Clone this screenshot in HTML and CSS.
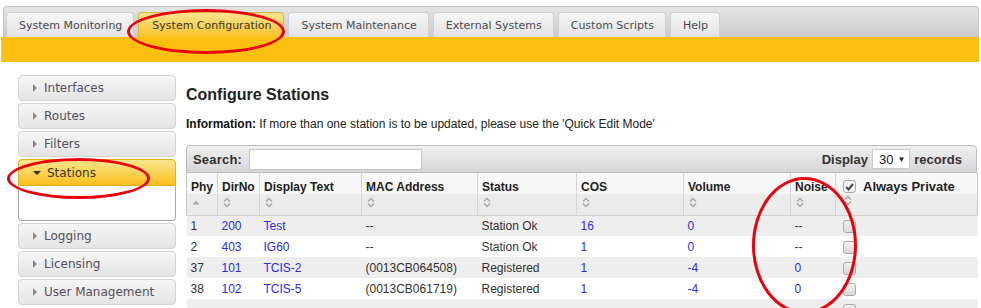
FILE: index.html
```html
<!DOCTYPE html>
<html>
<head>
<meta charset="utf-8">
<link rel="stylesheet" href="styles.css">
</head>
<body>
<div class="page">
  <div class="tabbar">
    <div class="tab">System Monitoring</div>
    <div class="tab active">System Configuration</div>
    <div class="tab">System Maintenance</div>
    <div class="tab">External Systems</div>
    <div class="tab">Custom Scripts</div>
    <div class="tab">Help</div>
  </div>
  <div class="yellowbar"></div>
  <div class="layout">
    <div class="sidebar">
      <div class="navitem"><span class="tri"></span>Interfaces</div>
      <div class="navitem"><span class="tri"></span>Routes</div>
      <div class="navitem"><span class="tri"></span>Filters</div>
      <div class="panel">
        <div class="navitem open"><span class="tri down"></span>Stations</div>
        <div class="panelbody"></div>
      </div>
      <div class="navitem"><span class="tri"></span>Logging</div>
      <div class="navitem"><span class="tri"></span>Licensing</div>
      <div class="navitem"><span class="tri"></span>User Management</div>
    </div>
    <div class="main">
      <h1 class="title">Configure Stations</h1>
      <p class="info"><b>Information:</b> If more than one station is to be updated, please use the 'Quick Edit Mode'</p>
      <div class="grid">
        <div class="toolbar">
          <label class="search">Search: <span class="searchbox"></span></label>
          <div class="display">Display <span class="select">30 <span class="caret">&#9660;</span></span> records</div>
        </div>
        <table class="data">
          <colgroup>
            <col class="c1"><col class="c2"><col class="c3"><col class="c4"><col class="c5"><col class="c6"><col class="c7"><col class="c8"><col class="c9">
          </colgroup>
          <thead>
            <tr>
              <th>Phy<span class="sort"><svg width="10" height="11" viewBox="0 0 10 11"><path d="M1.5 7.5 L5 3.5 L8.5 7.5 Z" fill="#a8a8a8"/></svg></span></th>
              <th>DirNo<span class="sort"><svg width="10" height="11" viewBox="0 0 10 11"><path d="M2 4.5 L5 1.5 L8 4.5 M2 6.5 L5 9.5 L8 6.5" fill="none" stroke="#a5a5a5" stroke-width="1.3"/></svg></span></th>
              <th>Display Text<span class="sort"><svg width="10" height="11" viewBox="0 0 10 11"><path d="M2 4.5 L5 1.5 L8 4.5 M2 6.5 L5 9.5 L8 6.5" fill="none" stroke="#a5a5a5" stroke-width="1.3"/></svg></span></th>
              <th>MAC Address<span class="sort"><svg width="10" height="11" viewBox="0 0 10 11"><path d="M2 4.5 L5 1.5 L8 4.5 M2 6.5 L5 9.5 L8 6.5" fill="none" stroke="#a5a5a5" stroke-width="1.3"/></svg></span></th>
              <th>Status<span class="sort"><svg width="10" height="11" viewBox="0 0 10 11"><path d="M2 4.5 L5 1.5 L8 4.5 M2 6.5 L5 9.5 L8 6.5" fill="none" stroke="#a5a5a5" stroke-width="1.3"/></svg></span></th>
              <th>COS<span class="sort"><svg width="10" height="11" viewBox="0 0 10 11"><path d="M2 4.5 L5 1.5 L8 4.5 M2 6.5 L5 9.5 L8 6.5" fill="none" stroke="#a5a5a5" stroke-width="1.3"/></svg></span></th>
              <th>Volume<span class="sort"><svg width="10" height="11" viewBox="0 0 10 11"><path d="M2 4.5 L5 1.5 L8 4.5 M2 6.5 L5 9.5 L8 6.5" fill="none" stroke="#a5a5a5" stroke-width="1.3"/></svg></span></th>
              <th>Noise<span class="sort"><svg width="10" height="11" viewBox="0 0 10 11"><path d="M2 4.5 L5 1.5 L8 4.5 M2 6.5 L5 9.5 L8 6.5" fill="none" stroke="#a5a5a5" stroke-width="1.3"/></svg></span></th>
              <th class="priv"><span class="chk checked"><svg width="11" height="10" viewBox="0 0 11 10"><path d="M2 5 L4.5 7.5 L9 2" fill="none" stroke="#444" stroke-width="2"/></svg></span>Always Private<span class="sort"><svg width="10" height="11" viewBox="0 0 10 11"><path d="M2 4.5 L5 1.5 L8 4.5 M2 6.5 L5 9.5 L8 6.5" fill="none" stroke="#a5a5a5" stroke-width="1.3"/></svg></span></th>
            </tr>
          </thead>
          <tbody>
            <tr class="odd"><td>1</td><td class="lnk">200</td><td class="lnk">Test</td><td>--</td><td>Station Ok</td><td class="lnk">16</td><td class="lnk">0</td><td>--</td><td><span class="chk"></span></td></tr>
            <tr><td>2</td><td class="lnk">403</td><td class="lnk">IG60</td><td>--</td><td>Station Ok</td><td class="lnk">1</td><td class="lnk">0</td><td>--</td><td><span class="chk"></span></td></tr>
            <tr class="odd"><td>37</td><td class="lnk">101</td><td class="lnk">TCIS-2</td><td>(0013CB064508)</td><td>Registered</td><td class="lnk">1</td><td class="lnk">-4</td><td class="lnk">0</td><td><span class="chk"></span></td></tr>
            <tr><td>38</td><td class="lnk">102</td><td class="lnk">TCIS-5</td><td>(0013CB061719)</td><td>Registered</td><td class="lnk">1</td><td class="lnk">-4</td><td class="lnk">0</td><td><span class="chk"></span></td></tr>
            <tr class="odd"><td></td><td></td><td></td><td></td><td></td><td></td><td></td><td></td><td><span class="chk"></span></td></tr>
          </tbody>
        </table>
      </div>
    </div>
  </div>
  <div class="ring ring-tab"></div>
  <div class="ring ring-nav"></div>
  <div class="ring ring-noise"></div>
</div>
</body>
</html>
```

FILE: styles.css
```css
* { box-sizing: border-box; }
html, body { margin: 0; padding: 0; background: #fff; }
body { font-family: "Liberation Sans", Arial, sans-serif; font-size: 12px; color: #333; overflow: hidden; }
.page { position: relative; width: 981px; height: 308px; }

.tabbar {
  margin: 6px 2px 0 3px;
  height: 31px;
  display: flex;
  align-items: flex-end;
  gap: 4px;
  padding-left: 2px;
  background: linear-gradient(#e4e4e4, #cbcbcb);
  border: 1px solid #c4c4c4;
  border-bottom: none;
  border-radius: 4px 4px 0 0;
}
.tab {
  height: 25px;
  padding: 0 11px 0 12px;
  display: flex;
  align-items: center;
  font-family: "DejaVu Sans", Verdana, sans-serif;
  font-size: 11px;
  color: #4c4a52;
  background: linear-gradient(#f7f7f7, #e2e2e2);
  border: 1px solid #d0d0d0;
  border-bottom: none;
  border-radius: 4px 4px 0 0;
}
.tab.active {
  background: linear-gradient(#fde38f, #fbc22a);
  border-color: #e4b440;
  color: #3a3520;
  padding: 0 12px 0 13px;
}
.yellowbar { height: 25px; margin: 0 2px 0 1px; background: #fdc012; }

.layout { display: flex; padding: 13px 0 0 18px; gap: 10px; }
.sidebar { width: 160px; display: flex; flex-direction: column; gap: 2px; }
.navitem {
  height: 26px;
  display: flex;
  align-items: center;
  padding-left: 14px;
  font-family: "DejaVu Sans", Verdana, sans-serif;
  font-size: 12px;
  color: #555060;
  background: linear-gradient(#f6f6f6, #e4e4e4);
  border: 1px solid #d3d3d3;
  border-radius: 4px;
}
.tri {
  width: 0; height: 0;
  border-left: 4px solid #888;
  border-top: 4px solid transparent;
  border-bottom: 4px solid transparent;
  margin-right: 7px;
}
.tri.down {
  border-left: 4px solid transparent;
  border-right: 4px solid transparent;
  border-top: 4px solid #333;
  border-bottom: none;
  margin-right: 6px;
}
.panel { display: flex; flex-direction: column; }
.navitem.open {
  height: 27px;
  background: linear-gradient(#fde58f, #fbbf1f);
  border-color: #e5ad20;
  border-radius: 4px 4px 0 0;
  color: #3b3417;
}
.panelbody { height: 35px; border: 1px solid #aaa; border-top: none; border-radius: 0 0 4px 4px; background: #fff; }

.main { flex: 1; padding-right: 4px; }
.title { margin: 10px 0 0 0; font-size: 16px; font-weight: bold; color: #222; line-height: 20px; }
.info { margin: 11px 0 0 0; font-size: 12px; line-height: 16px; color: #222; }
.info b { color: #111; }

.grid { margin-top: 13px; width: 791px; }
.toolbar {
  height: 28px;
  display: flex;
  align-items: center;
  justify-content: space-between;
  padding: 0 14px 0 6px;
  background: linear-gradient(#f0f0f0, #d6d6d6);
  border: 1px solid #bdbdbd;
  border-radius: 4px 4px 0 0;
  font-weight: bold;
  font-size: 13px;
  color: #333;
}
.search { display: flex; align-items: center; gap: 7px; letter-spacing: 0.2px; }
.searchbox { display: inline-block; width: 173px; height: 21px; background: #fff; border: 1px solid #c4c4c4; }
.display { display: flex; align-items: center; gap: 4px; }
.select {
  display: inline-flex; align-items: center; gap: 4px;
  height: 20px; padding: 0 4px 0 6px;
  background: #fff; border: 1px solid #ccc;
  font-weight: normal; font-size: 13px; color: #222;
}
.caret { font-size: 8px; color: #222; }

.data { border-collapse: collapse; width: 791px; table-layout: fixed; }
.c1 { width: 31px; } .c2 { width: 42px; } .c3 { width: 102px; } .c4 { width: 116px; } .c5 { width: 99px; }
.c6 { width: 107px; } .c7 { width: 107px; } .c8 { width: 45px; } .c9 { width: 142px; }
.data th {
  height: 42px;
  text-align: left;
  vertical-align: top;
  padding: 7px 4px 0 4px;
  font-size: 12px;
  font-weight: bold;
  color: #222;
  background: linear-gradient(#f8f8f8 0, #f8f8f8 50%, #ebebeb 50%, #ebebeb 100%);
  border-left: 1px solid #d4d4d4;
  border-bottom: 1px solid #cfcfcf;
  line-height: 14px;
}
.data th:first-child { border-left: 1px solid #c8c8c8; }
.data th:last-child { border-right: 1px solid #c8c8c8; }
.sort { display: block; margin-top: 3px; height: 11px; }
.sort svg { display: block; }
.data th.priv { padding-left: 7px; font-size: 13px; }
.data th.priv .chk { margin-right: 7px; vertical-align: -2px; }
.data th.priv .sort { margin-top: 1px; }

.data td { height: 21px; padding: 0 4px; font-size: 12px; color: #333; white-space: nowrap; }
.data tr.odd td { background: #eeeeee; }
.data td.lnk { color: #2b2bf0; }
.data td:last-child { padding-left: 7px; }

.chk {
  display: inline-block; width: 13px; height: 13px;
  border: 1px solid #aaa; border-radius: 3px;
  background: linear-gradient(#f2f2f2, #d9d9d9);
  vertical-align: middle;
}
.chk.checked { background: #f4f4f4; position: relative; }
.chk.checked svg { position: absolute; left: 0; top: 1px; }

.ring { position: absolute; border: 3px solid #e8000c; border-radius: 50%; pointer-events: none; }
.ring-tab { left: 127px; top: 3px; width: 158px; height: 45px; }
.ring-nav { left: 7px; top: 152px; width: 143px; height: 41px; }
.ring-noise { left: 752px; top: 171px; width: 105px; height: 137px; }
```
